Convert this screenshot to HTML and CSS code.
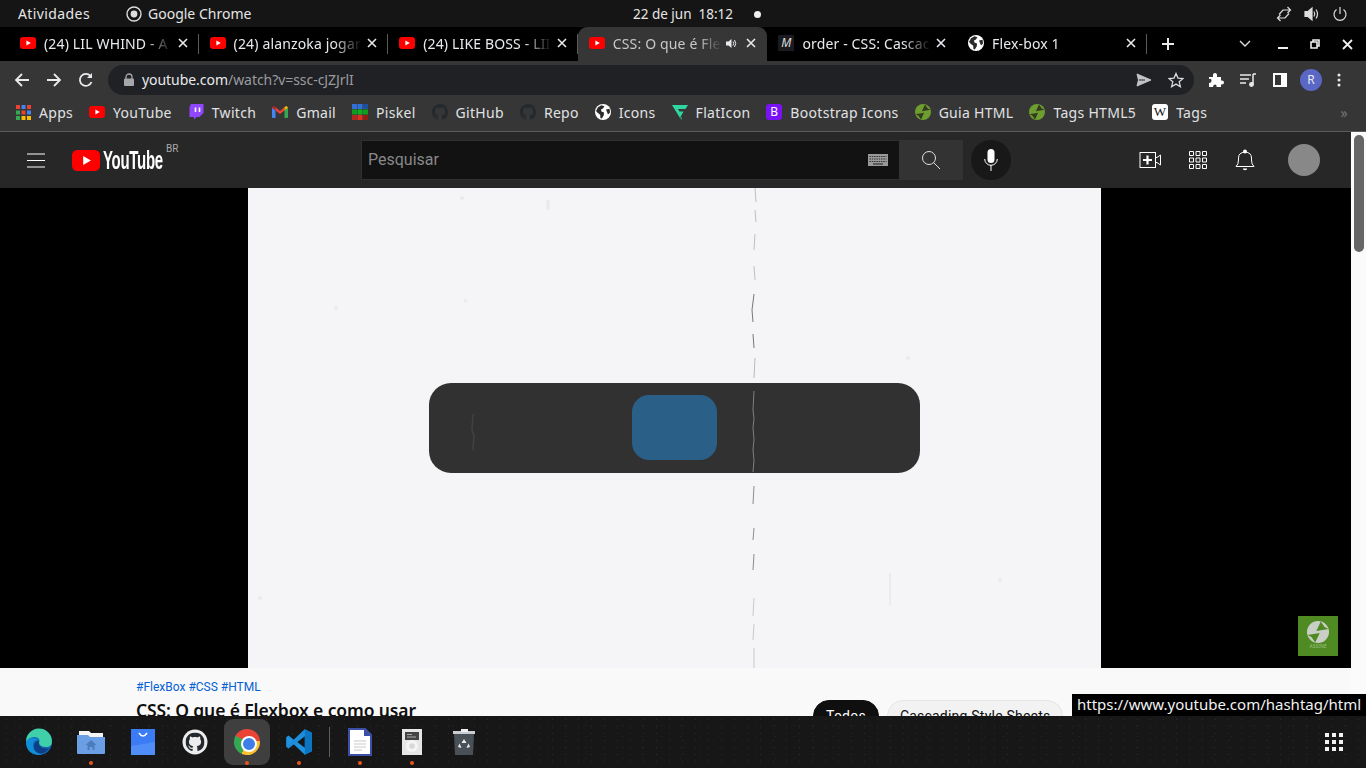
FILE: index.html
```html
<!DOCTYPE html>
<html lang="pt-BR">
<head>
  <meta charset="UTF-8" />
  <title>CSS: O que é Flexbox e como usar</title>
  <link rel="stylesheet" href="styles.css">
</head>
<body>

<svg class="defs" width="0" height="0">
  <symbol id="i-yt" viewBox="0 0 16 12"><rect width="16" height="12" rx="3" fill="#f00"/><path d="M6.4 3.4 10.8 6 6.4 8.6z" fill="#fff"/></symbol>
  <symbol id="i-globe" viewBox="0 0 16 16"><circle cx="8" cy="8" r="8" fill="#fff"/><path d="M3 3.2 6.4 1.3 9.4 2.2 8 4.6 6 5.4 6.4 7.4 9 8.4 8.8 11.2 6.8 14.4 5.4 14 5.2 10.8 2.6 8.8 1 7zM11 5.4 14.6 4.8 15 8.4 13 10.6 12 8z" fill="#2b2b2b"/></symbol>
  <symbol id="i-gh" viewBox="0 0 16 16"><path fill="#24292e" d="M8 0C3.58 0 0 3.58 0 8c0 3.54 2.29 6.53 5.47 7.59.4.07.55-.17.55-.38 0-.19-.01-.82-.01-1.49-2.01.37-2.53-.49-2.69-.94-.09-.23-.48-.94-.82-1.13-.28-.15-.68-.52-.01-.53.63-.01 1.08.58 1.23.82.72 1.21 1.87.87 2.33.66.07-.52.28-.87.51-1.07-1.78-.2-3.64-.89-3.64-3.95 0-.87.31-1.59.82-2.15-.08-.2-.36-1.02.08-2.12 0 0 .67-.21 2.2.82.64-.18 1.32-.27 2-.27.68 0 1.36.09 2 .27 1.53-1.04 2.2-.82 2.2-.82.44 1.1.16 1.92.08 2.12.51.56.82 1.27.82 2.15 0 3.07-1.87 3.75-3.65 3.95.29.25.54.73.54 1.48 0 1.07-.01 1.93-.01 2.2 0 .21.15.46.55.38A8.013 8.013 0 0016 8c0-4.42-3.58-8-8-8z"/></symbol>
  <symbol id="i-guia" viewBox="0 0 16 16"><circle cx="8" cy="8" r="8" fill="#6f9e30"/><path d="M10 .4 6.800 7.200 15.600 5.800 12.800 4.400zM6 15.600 9.200 8.800 .4 10.200 3.200 11.600z" fill="#333c1e"/></symbol>
  <symbol id="i-x" viewBox="0 0 10 10"><path d="M1 1 9 9M9 1 1 9" stroke="#e8eaed" stroke-width="1.6" fill="none"/></symbol>
</svg>

<header class="topbar">
  <div class="topbar-left">
    <span class="activities">Atividades</span>
    <span class="app-name">
      <svg width="16" height="16" viewBox="0 0 16 16"><circle cx="8" cy="8" r="7" fill="none" stroke="#ddd" stroke-width="1.4"/><circle cx="8" cy="8" r="3.4" fill="#ddd"/></svg>
      Google Chrome
    </span>
  </div>
  <div class="clock">22 de jun&nbsp;&nbsp;18:12</div>
  <div class="tray">
    <svg width="16" height="16" viewBox="0 0 16 16" fill="none" stroke="#ddd" stroke-width="1.2"><path d="M3 8.500 7 4H14.500M11.500 1 14.500 4 11.500 7M13 7.500 9 12H1.500M4.500 9 1.500 12 4.500 15"/></svg>
    <svg width="16" height="16" viewBox="0 0 16 16" fill="none" stroke="#ddd" stroke-width="1.2"><path d="M1 5.5H4L8 2V14L4 10.5H1z" fill="#ddd"/><path d="M10 5.5Q11.5 8 10 10.5M12 3.5Q15 8 12 12.5"/></svg>
    <svg width="16" height="16" viewBox="0 0 16 16" fill="none" stroke="#ddd" stroke-width="1.2"><path d="M8 1V8M4.5 3.5A6 6 0 1 0 11.5 3.5"/></svg>
  </div>
</header>

<nav class="tabstrip">
  <div class="tab">
    <svg class="favicon" width="16" height="12"><use href="#i-yt"/></svg>
    <span class="tab-title">(24) LIL WHIND - A</span>
    <svg class="tab-close" width="10" height="10"><use href="#i-x"/></svg>
  </div>
  <div class="tab">
    <svg class="favicon" width="16" height="12"><use href="#i-yt"/></svg>
    <span class="tab-title">(24) alanzoka jogar</span>
    <svg class="tab-close" width="10" height="10"><use href="#i-x"/></svg>
  </div>
  <div class="tab">
    <svg class="favicon" width="16" height="12"><use href="#i-yt"/></svg>
    <span class="tab-title">(24) LIKE BOSS - LII</span>
    <svg class="tab-close" width="10" height="10"><use href="#i-x"/></svg>
  </div>
  <div class="tab active">
    <svg class="favicon" width="16" height="12"><use href="#i-yt"/></svg>
    <span class="tab-title">CSS: O que é Fle</span>
    <svg class="tab-audio" width="11" height="11" viewBox="0 0 11 11"><path d="M0 3.5H2.5L5.5 1V10L2.5 7.5H0z" fill="#e8eaed"/><path d="M7 3.5Q8.5 5.500 7 7.5M8.5 2Q11 5.5 8.5 9" fill="none" stroke="#e8eaed"/></svg>
    <svg class="tab-close" width="10" height="10"><use href="#i-x"/></svg>
  </div>
  <div class="tab no-sep">
    <span class="favicon mdn">M</span>
    <span class="tab-title">order - CSS: Cascac</span>
    <svg class="tab-close" width="10" height="10"><use href="#i-x"/></svg>
  </div>
  <div class="tab">
    <svg class="favicon" width="16" height="16"><use href="#i-globe"/></svg>
    <span class="tab-title">Flex-box 1</span>
    <svg class="tab-close" width="10" height="10"><use href="#i-x"/></svg>
  </div>
  <svg class="new-tab" width="12" height="12" viewBox="0 0 12 12"><path d="M6 0V12M0 6H12" stroke="#e8eaed" stroke-width="2"/></svg>
  <div class="win-controls">
    <svg class="win-list" width="12" height="8" viewBox="0 0 12 8"><path d="M1 1 6 6 11 1" fill="none" stroke="#ddd" stroke-width="1.4"/></svg>
    <svg width="10" height="10" viewBox="0 0 10 10"><path d="M0 9H10" stroke="#eee" stroke-width="2"/></svg>
    <svg width="10" height="10" viewBox="0 0 10 10" fill="none" stroke="#eee" stroke-width="1.6"><path d="M3 3V1H9V7H7M1 3H7V9H1z"/></svg>
    <svg width="11" height="11" viewBox="0 0 11 11"><path d="M1 1 10 10M10 1 1 10" stroke="#eee" stroke-width="1.8"/></svg>
  </div>
</nav>

<div class="toolbar">
  <svg class="tool-icon" width="16" height="16" viewBox="0 0 16 16" fill="none" stroke="#e8eaed" stroke-width="1.8"><path d="M15 8H2M8 2 2 8 8 14"/></svg>
  <svg class="tool-icon" width="16" height="16" viewBox="0 0 16 16" fill="none" stroke="#e8eaed" stroke-width="1.8"><path d="M1 8H14M8 2 14 8 8 14"/></svg>
  <svg class="tool-icon" width="16" height="16" viewBox="0 0 16 16" fill="none" stroke="#e8eaed" stroke-width="1.8"><path d="M13.5 10A6 6 0 1 1 12.5 4"/><path d="M14 1V6H9z" fill="#e8eaed" stroke="none"/></svg>
  <div class="omnibox">
    <svg width="10" height="13" viewBox="0 0 10 13"><path d="M2 6V4A3 3 0 0 1 8 4V6" fill="none" stroke="#a5a7aa" stroke-width="1.3"/><rect y="5.5" width="10" height="7.5" rx="1" fill="#a5a7aa"/></svg>
    <span class="url"><b>youtube.com</b>/watch?v=ssc-cJZJrlI</span>
    <svg class="omni-send" width="16" height="14" viewBox="0 0 16 14"><path d="M1 1 15 7 1 13 2.5 7z" fill="#c3c4c6" stroke="#c3c4c6" stroke-linejoin="round"/><path d="M3 7H9" stroke="#26272a"/></svg>
    <svg class="omni-star" width="16" height="16" viewBox="0 0 16 16"><path d="M8 1.5 10 6.100 15 6.500 11.200 9.800 12.400 14.700 8 12.100 3.600 14.700 4.800 9.800 1 6.500 6 6.100z" fill="none" stroke="#d8d9db" stroke-width="1.3"/></svg>
  </div>
  <svg class="ext-puzzle" width="16" height="16" viewBox="0 0 16 16"><path d="M1 5H5Q4.5 1 7 1T9 5H13V8.5Q16 8 16 10.5T13 12.5V15H8.5Q9 12.5 7 12.5T5 15H1V11Q3.5 11 3.5 8.5T1 7z" fill="#fff"/></svg>
  <svg class="ext-queue" width="16" height="14" viewBox="0 0 16 14" fill="none" stroke="#e8eaed" stroke-width="1.5"><path d="M0 2H11M0 6H9M0 10H6"/><path d="M13 1V11M13 1H16"/><circle cx="11.5" cy="11.5" r="1.7" fill="#e8eaed"/></svg>
  <span class="ext-panel"></span>
  <span class="profile">R</span>
  <svg class="ext-dots" width="4" height="14" viewBox="0 0 4 14"><circle cx="2" cy="2" r="1.5" fill="#e8eaed"/><circle cx="2" cy="7" r="1.5" fill="#e8eaed"/><circle cx="2" cy="12" r="1.5" fill="#e8eaed"/></svg>
</div>

<div class="bookmarks">
  <a class="bm">
    <svg width="15" height="15" viewBox="0 0 15 15"><rect width="4" height="4" fill="#ea4335"/><rect x="5.5" width="4" height="4" fill="#4285f4"/><rect x="11" width="4" height="4" fill="#ea4335"/><rect y="5.5" width="4" height="4" fill="#34a853"/><rect x="5.5" y="5.5" width="4" height="4" fill="#ea4335"/><rect x="11" y="5.5" width="4" height="4" fill="#4285f4"/><rect y="11" width="4" height="4" fill="#34a853"/><rect x="5.5" y="11" width="4" height="4" fill="#fbbc04"/><rect x="11" y="11" width="4" height="4" fill="#fbbc04"/></svg>
    Apps
  </a>
  <a class="bm"><svg width="16" height="12"><use href="#i-yt"/></svg>YouTube</a>
  <a class="bm">
    <svg width="16" height="16" viewBox="0 0 15 16"><path d="M2.5 0H15V9L11 13H8L5.5 15.5V13H1V3z" fill="#9146ff"/><path d="M7 3.500V8M11 3.500V8" stroke="#fff" stroke-width="1.6"/></svg>
    Twitch
  </a>
  <a class="bm">
    <svg width="16" height="12" viewBox="0 0 16 12"><path d="M0 1.5 3.5 4V12H1Q0 12 0 11z" fill="#4285f4"/><path d="M16 1.5 12.5 4V12H15Q16 12 16 11z" fill="#34a853"/><path d="M3.5 1 8 5 12.5 1V4.5L8 8 3.5 4.5z" fill="#ea4335"/><path d="M12.5 1 14.5 0 16 1.5 12.5 4.5z" fill="#fbbc04"/><path d="M0 1.5 1.5 0 3.5 1V4.500z" fill="#c5221f"/></svg>
    Gmail
  </a>
  <a class="bm">
    <svg width="16" height="16" viewBox="0 0 16 16"><rect width="5" height="5" fill="#2f6fd6"/><rect x="5.5" width="5" height="5" fill="#2f6fd6"/><rect x="11" width="5" height="5" fill="#1d4f9c"/><rect y="5.5" width="5" height="5" fill="#0f9d1f"/><rect x="5.5" y="5.5" width="5" height="5" fill="#11b022"/><rect x="11" y="5.5" width="5" height="5" fill="#0f9d1f"/><rect y="11" width="5" height="5" fill="#b3261e"/><rect x="5.5" y="11" width="5" height="5" fill="#d93025"/><rect x="11" y="11" width="5" height="5" fill="#8f1d16"/></svg>
    Piskel
  </a>
  <a class="bm"><svg width="16" height="16"><use href="#i-gh"/></svg>GitHub</a>
  <a class="bm"><svg width="16" height="16"><use href="#i-gh"/></svg>Repo</a>
  <a class="bm"><svg width="16" height="16"><use href="#i-globe"/></svg>Icons</a>
  <a class="bm">
    <svg width="16" height="15" viewBox="0 0 16 15"><path d="M0 0H16L13.5 4H6L7.5 6.5H11.5L8 13 0 0z" fill="#2fd6a0"/><path d="M8 13 9.5 15 10 12z" fill="#1fb583"/></svg>
    FlatIcon
  </a>
  <a class="bm"><span class="bs-logo">B</span>Bootstrap Icons</a>
  <a class="bm"><svg width="16" height="16"><use href="#i-guia"/></svg>Guia HTML</a>
  <a class="bm"><svg width="16" height="16"><use href="#i-guia"/></svg>Tags HTML5</a>
  <a class="bm"><span class="wiki-logo">W</span>Tags</a>
  <span class="bm-more">»</span>
</div>

<main class="page">
  <div class="page-main">
    <div class="masthead">
      <div class="mast-left">
        <svg width="18" height="15" viewBox="0 0 18 15"><path d="M0 1H18M0 7.5H18M0 14H18" stroke="#fff"/></svg>
        <div class="yt-logo">
          <svg width="28" height="21"><use href="#i-yt"/></svg>
          <span class="yt-word"><span>YouTube</span></span>
          <span class="yt-br">BR</span>
        </div>
      </div>
      <div class="search">
        <div class="search-input">
          <span>Pesquisar</span>
          <svg width="20" height="12" viewBox="0 0 20 12"><rect width="20" height="12" fill="#999"/><path d="M1.5 2.5H18.5M1.5 5H18.5M1.5 7.5H18.5" stroke="#333" stroke-dasharray="1.5 .8"/><path d="M5 10H15" stroke="#333" stroke-width="1.2"/></svg>
        </div>
        <div class="search-btn">
          <svg width="20" height="20" viewBox="0 0 20 20" fill="none" stroke="#e0e0e0"><circle cx="8" cy="8" r="6.5"/><path d="M12.500 12.500 19 19"/></svg>
        </div>
        <div class="mic-btn">
          <svg width="14" height="24" viewBox="0 0 14 24"><rect x="3.5" y="1" width="7" height="14" rx="3.5" fill="#fff"/><path d="M.7 11A6.3 6.3 0 0 0 13.3 11M7 17V23" fill="none" stroke="#fff"/></svg>
        </div>
      </div>
      <div class="mast-right">
        <svg width="22" height="18" viewBox="0 0 22 18" fill="none" stroke="#fff"><rect x="1" y="1.5" width="15.500" height="15"/><path d="M16.5 6.500H18L21.5 4V14L18 11.5H16.5"/><path d="M8.5 4.5V13.5M4 9H13" stroke-width="2.2"/></svg>
        <svg class="mast-apps" width="18" height="18" viewBox="0 0 18 18" fill="none" stroke="#fff"><path d="M.5.5H4.5V4.500H.5zM7 .5H11V4.500H7zM13.5.5H17.5V4.500H13.5zM.5 7H4.500V11H.5zM7 7H11V11H7zM13.5 7H17.5V11H13.5zM.5 13.5H4.5V17.5H.5zM7 13.5H11V17.5H7zM13.5 13.5H17.5V17.5H13.5z"/></svg>
        <svg class="mast-bell" width="20" height="22" viewBox="0 0 20 22"><path d="M1 17.5Q3.5 15.5 3.5 11V9Q3.5 3.5 10 3Q16.5 3.5 16.5 9V11Q16.5 15.5 19 17.5z" fill="none" stroke="#fff"/><circle cx="10" cy="2.5" r="2" fill="#fff"/><path d="M8 19.5H12V20.5Q10 22 8 20.5z" fill="#fff"/></svg>
        <span class="avatar"></span>
      </div>
    </div>

    <section class="player">
      <div class="frame">
        <div class="demo-bar">
          <div class="demo-item"></div>
        </div>
        <!-- scratches on the old film frame -->
        <svg class="film-marks" width="853" height="480" viewBox="0 0 853 480" fill="none">
          <path d="M507 0 508 14M507 22 508 34M507 46 506 62M506 78 507 92" stroke="#b0b0b0" stroke-width=".8"/>
          <path d="M506 106 504 122 505 134M505 146 506 160" stroke="#777" stroke-width="1"/>
          <path d="M507 170 506 190M506 203 505 222Q507 230 505 240Q507 252 505 262 507 272 505 284" stroke="#a0a0a0" stroke-width=".7"/>
          <path d="M506 298 505 316M506 340 505 352M506 366 505 382" stroke="#808080" stroke-width=".9"/>
          <path d="M506 410 505 428M506 436 505 452M506 460 506 480" stroke="#bdbdbd" stroke-width=".8"/>
          <path d="M225 226 224 242 226 248 225 262" stroke="#424242" stroke-width="1.5"/>
          <path d="M642 385V418" stroke="#e2e2e4"/>
          <path d="M300 12V22M212 10H216M86 120H90M216 113H219M658 170H662M750 392H754M10 410H14" stroke="#eaeaec" stroke-width="3"/>
        </svg>
      </div>
      <div class="watermark">
        <svg width="22" height="22" viewBox="0 0 16 16"><circle cx="8" cy="8" r="8" fill="#c9cfc4"/><path d="M10 .4 6.800 7.200 15.600 5.800 12.800 4.400zM6 15.600 9.200 8.800 .4 10.200 3.200 11.600z" fill="#4f8a23"/></svg>
        <span>ASSINE</span>
      </div>
    </section>

    <section class="below">
      <div class="video-info">
        <div class="tags">#FlexBox #CSS #HTML</div>
        <h1>CSS: O que é Flexbox e como usar</h1>
      </div>
      <div class="chips">
        <span class="chip chip-on">Todos</span>
        <span class="chip">Cascading Style Sheets</span>
      </div>
    </section>
  </div>
  <div class="scrollbar"><div class="thumb"></div></div>
  <div class="link-tip">https://www.youtube.com/hashtag/html</div>
</main>

<footer class="dock">
  <div class="dock-item">
    <svg width="28" height="28" viewBox="0 0 28 28"><circle cx="14" cy="14" r="13" fill="#1566b8"/><path d="M1 14A13 13 0 0 1 27 13Q27 19 21 19T14 15Q16 10 10 9Q4 9 1 14z" fill="#3fcfa9"/><path d="M8 17Q8 25 17 26.5Q10 28 5 24Q1 20 1 14Q3 10 8 10Q12 10 13 12Q8 12 8 17z" fill="#0f8fd6"/><path d="M14 17Q18 22 24 20Q20 27 13 25Q8 22 9 17Q10 13 14 13z" fill="#0b3f86"/></svg>
  </div>
  <div class="dock-item has-dot">
    <svg width="30" height="26" viewBox="0 0 30 26"><path d="M3 2H13L15 4H27V10H3z" fill="#f4f4f4"/><path d="M1 6H12L14 8H29V24Q29 25 28 25H2Q1 25 1 24z" fill="#6a9fe6"/><path d="M15 11 9.5 16H11.5V21H13.5V18H16.5V21H18.5V16H20.5z" fill="#4b7dbd"/></svg>
  </div>
  <div class="dock-item">
    <svg width="24" height="26" viewBox="0 0 24 26"><rect width="24" height="26" fill="#3b7cf5"/><path d="M0 26V17L24 13V26z" fill="#4f8df7"/><path d="M8 4Q12 10 16 4" fill="none" stroke="#fff" stroke-width="1.5"/></svg>
  </div>
  <div class="dock-item">
    <svg width="26" height="26" viewBox="0 0 26 26"><circle cx="13" cy="13" r="12.5" fill="#ededed"/><svg x="3.5" y="3.5" width="19" height="19" viewBox="0 0 16 16"><use href="#i-gh"/></svg></svg>
  </div>
  <div class="dock-item chrome-active has-dot">
    <span class="chrome-logo"></span>
  </div>
  <div class="dock-item has-dot">
    <svg width="28" height="28" viewBox="0 0 24 24"><path fill-rule="evenodd" fill="#1f93e0" d="M17 1 23 4V20L17 23 7.5 14 3 17.5 1 16V8L3 6.5 7.5 10zM17 7 10.5 12 17 17z"/><path d="M17 1 23 4V20L17 23z" fill="#0a75c2"/><path d="M1 16 17 1V7L3 17.5z" fill="#1b86d6" opacity=".5"/></svg>
  </div>
  <span class="dock-sep"></span>
  <div class="dock-item has-dot">
    <svg width="24" height="28" viewBox="0 0 24 28"><path d="M1 1H17L23 7V27H1z" fill="#fff" stroke="#3b4ea8" stroke-width="2"/><path d="M16 1 23 8H16z" fill="#3b4ea8"/><path d="M6 13H18M6 16H18M6 19H18M6 22H14" stroke="#c7c8cc"/></svg>
  </div>
  <div class="dock-item has-dot">
    <svg width="20" height="26" viewBox="0 0 20 26"><rect width="20" height="26" fill="#e6e6e6"/><rect x="3" y="3" width="14" height="8" fill="#444"/><path d="M5 5.500H10M5 8H14" stroke="#aaa"/><circle cx="10" cy="17" r="6" fill="#f4f4f4"/><circle cx="10" cy="17" r="2.8" fill="#d7d7d7"/></svg>
  </div>
  <div class="dock-item">
    <svg width="22" height="26" viewBox="0 0 22 26"><rect y="2" width="22" height="3" fill="#c9ccd0"/><rect x="8" width="7" height="3" fill="#eee"/><path d="M1 5H21L20 26H2z" fill="#4a5058"/><path d="M11 10 13.5 14H8.5zM15.5 14.5 17 18 13.5 19zM6.5 14.5 5 18 8.5 19z" fill="#eee"/></svg>
  </div>
  <svg class="dock-grid" width="18" height="18" viewBox="0 0 18 18" fill="#f2f2f2"><rect width="4" height="4"/><rect x="7" width="4" height="4"/><rect x="14" width="4" height="4"/><rect y="7" width="4" height="4"/><rect x="7" y="7" width="4" height="4"/><rect x="14" y="7" width="4" height="4"/><rect y="14" width="4" height="4"/><rect x="7" y="14" width="4" height="4"/><rect x="14" y="14" width="4" height="4"/></svg>
</footer>

</body>
</html>
```

FILE: styles.css
```css
* {
  box-sizing: border-box;
}
body {
  margin: 0;
  height: 768px;
  overflow: hidden;
  display: flex;
  flex-direction: column;
  font-family: "Noto Sans", sans-serif;
  font-size: 14px;
  color: #e8eaed;
  background: #000;
}
svg {
  flex: none;
  display: block;
}
.defs {
  position: absolute;
}

/* gnome bar */
.topbar {
  height: 27px;
  flex: none;
  background: #151515;
  display: grid;
  grid-template-columns: 1fr auto 1fr;
  align-items: center;
  padding: 0 18px;
  color: #e6e6e6;
}
.topbar-left {
  display: flex;
  align-items: center;
  gap: 36px;
}
.activities {
  letter-spacing: .4px;
}
.app-name {
  display: flex;
  align-items: center;
  gap: 6px;
}
.clock {
  position: relative;
  font-size: 13.5px;
}
.clock::after {
  content: "";
  position: absolute;
  left: 100%;
  top: 6px;
  margin-left: 21px;
  width: 7px;
  height: 7px;
  border-radius: 50%;
  background: #eee;
}
.tray {
  display: flex;
  justify-content: flex-end;
  gap: 12px;
}

/* tabs */
.tabstrip {
  height: 34px;
  flex: none;
  background: #000;
  display: flex;
  align-items: stretch;
  padding-left: 9px;
}
.tab {
  position: relative;
  width: 189.6px;
  display: flex;
  align-items: center;
  padding: 0 11px 2px;
  letter-spacing: .15px;
}
.tab::after {
  content: "";
  position: absolute;
  right: 0;
  top: 7px;
  bottom: 7px;
  width: 1px;
  background: #5a5a5a;
}
.tab.active {
  background: #363636;
  border-radius: 9px 9px 0 0;
  color: #c8c8c8;
}
.tab.active::after,
.tab.no-sep::after {
  display: none;
}
.favicon {
  width: 16px;
  margin-right: 8px;
  flex: none;
}
.mdn {
  height: 16px;
  background: #1b1b1f;
  font-size: 12px;
  font-style: italic;
  text-align: center;
  line-height: 16px;
  color: #ddd;
}
.tab-title {
  flex: 1;
  min-width: 0;
  white-space: nowrap;
  overflow: hidden;
  -webkit-mask-image: linear-gradient(to right, #000 78%, transparent 100%);
  mask-image: linear-gradient(to right, #000 78%, transparent 100%);
}
.tab-close {
  margin-left: 5px;
}
.tab-audio {
  margin-left: 4px;
  margin-right: 4px;
}
.new-tab {
  align-self: center;
  margin-left: 15px;
}
.win-controls {
  margin-left: auto;
  display: flex;
  align-items: center;
  gap: 22px;
  padding-right: 13px;
}
.win-list {
  margin-right: 5px;
}

/* toolbar */
.toolbar {
  height: 37px;
  flex: none;
  background: #363636;
  display: flex;
  align-items: center;
  padding-left: 14px;
}
.tool-icon {
  margin-right: 16px;
}
.omnibox {
  width: 1086px;
  height: 30px;
  margin-left: -2px;
  border-radius: 15px;
  background: #202124;
  display: flex;
  align-items: center;
  padding: 0 10px 0 16px;
  color: #9a9ca0;
}
.url {
  margin-left: 8px;
  flex: 1;
  letter-spacing: -.05px;
}
.url b {
  font-weight: 400;
  color: #e8eaed;
}
.omni-star {
  margin-left: 16px;
}
.ext-puzzle {
  margin-left: 14px;
}
.ext-queue {
  margin-left: 16px;
}
.ext-panel {
  width: 14px;
  height: 14px;
  margin-left: 17px;
  border: 2px solid #fff;
  border-right-width: 6px;
  background: #363636;
}
.profile {
  width: 22px;
  height: 22px;
  margin-left: 13px;
  border-radius: 50%;
  background: #5a67c4;
  font-size: 12px;
  line-height: 22px;
  text-align: center;
}
.ext-dots {
  margin-left: 15px;
}

/* bookmarks */
.bookmarks {
  height: 33px;
  flex: none;
  background: #363636;
  display: flex;
  align-items: center;
  padding: 0 0 5px 16px;
  gap: 16px;
  color: #e0e2e5;
  letter-spacing: .3px;
}
.bm {
  display: flex;
  align-items: center;
  gap: 8px;
}
.bs-logo {
  width: 16px;
  height: 16px;
  border-radius: 3px;
  background: #7a12f5;
  color: #fff;
  font-size: 12px;
  line-height: 16px;
  text-align: center;
}
.wiki-logo {
  width: 16px;
  height: 16px;
  border-radius: 3px;
  background: #fff;
  color: #111;
  font-family: "Liberation Serif", serif;
  font-size: 13px;
  line-height: 16px;
  text-align: center;
}
.bm-more {
  margin-left: auto;
  margin-right: 18px;
  color: #777;
}

/* youtube page */
.page {
  position: relative;
  height: 585px;
  flex: none;
  display: flex;
  border-top: 1px solid #5c5c5c;
  overflow: hidden;
  background: #f9f9f9;
}
.page-main {
  flex: 1;
  min-width: 0;
  display: flex;
  flex-direction: column;
}
.masthead {
  height: 56px;
  flex: none;
  background: #272727;
  display: flex;
  align-items: center;
  padding-left: 27px;
}
.mast-left {
  display: flex;
  align-items: center;
  gap: 27px;
  width: 334px;
}
.yt-logo {
  display: flex;
  align-items: center;
  gap: 3px;
}
.yt-word {
  width: 59px;
  font-family: "Liberation Sans", sans-serif;
  font-weight: 700;
  font-size: 25px;
  line-height: 20px;
  color: #fff;
  white-space: nowrap;
}
.yt-word span {
  display: inline-block;
  transform: scaleX(.6);
  transform-origin: left center;
  letter-spacing: -.5px;
}
.yt-br {
  align-self: flex-start;
  margin: -7px 0 0 1px;
  font-family: Roboto, sans-serif;
  font-size: 10px;
  line-height: 12px;
  color: #aaa;
}
.search {
  display: flex;
  align-items: center;
}
.search-input {
  width: 538px;
  height: 40px;
  background: #121212;
  border: 1px solid #303030;
  border-right: 0;
  display: flex;
  align-items: center;
  justify-content: space-between;
  padding: 0 11px 0 6px;
  font-family: Roboto, sans-serif;
  font-size: 16px;
  color: #888;
}
.search-input span {
  margin-top: -2px;
}
.search-btn {
  width: 64px;
  height: 40px;
  background: #333;
  display: flex;
  align-items: center;
  justify-content: center;
}
.mic-btn {
  width: 40px;
  height: 40px;
  margin-left: 8px;
  border-radius: 50%;
  background: #181818;
  display: flex;
  align-items: center;
  justify-content: center;
}
.mast-right {
  margin-left: auto;
  display: flex;
  align-items: center;
  padding-right: 31px;
}
.mast-apps {
  margin-left: 28px;
}
.mast-bell {
  margin-left: 28px;
}
.avatar {
  width: 32px;
  height: 32px;
  margin-left: 33px;
  border-radius: 50%;
  background: #888;
}
.player {
  position: relative;
  height: 480px;
  flex: none;
  background: #000;
  display: flex;
  justify-content: center;
  padding-right: 3px;
}
.frame {
  position: relative;
  width: 853px;
  height: 480px;
  background: #f5f5f7;
  display: flex;
  align-items: center;
  justify-content: center;
}
.demo-bar {
  width: 491px;
  height: 90px;
  border-radius: 22px;
  background: #323132;
  display: flex;
  justify-content: center;
  padding-top: 12px;
}
.demo-item {
  width: 85px;
  height: 65px;
  border-radius: 17px;
  background: #2a5f87;
}
.film-marks {
  position: absolute;
  left: 0;
  top: 0;
}
.watermark {
  position: absolute;
  left: 1298px;
  top: 428px;
  width: 40px;
  height: 40px;
  background: #4f8a23;
  display: flex;
  flex-direction: column;
  align-items: center;
  padding-top: 5px;
  font-size: 5px;
  color: #9fc07f;
}
.below {
  flex: 1;
  min-height: 0;
  display: flex;
  padding-left: 136px;
  background: #f9f9f9;
  color: #0f0f0f;
}
.video-info {
  width: 677px;
  flex: none;
  padding-top: 12px;
}
.tags {
  font-family: Roboto, sans-serif;
  font-size: 12px;
  line-height: 14px;
  color: #065fd4;
}
.below h1 {
  margin: 4px 0 0;
  font-size: 17.5px;
  font-weight: 600;
  line-height: 24px;
  letter-spacing: -.12px;
}
.chips {
  display: flex;
  gap: 8px;
  padding-top: 32px;
}
.chip {
  height: 32px;
  padding: 0 12px;
  border-radius: 16px;
  border: 1px solid #e5e5e5;
  background: #f2f2f2;
  font-family: Roboto, sans-serif;
  line-height: 30px;
  letter-spacing: .22px;
  white-space: nowrap;
}
.chip-on {
  background: #0f0f0f;
  border-color: #0f0f0f;
  color: #fff;
}
.scrollbar {
  width: 15px;
  flex: none;
  background: #fbfbfb;
  padding: 3px 2px 0 3px;
}
.thumb {
  height: 117px;
  border-radius: 5px;
  background: #666;
}
.link-tip {
  position: absolute;
  right: 0;
  bottom: 0;
  width: 294px;
  height: 22px;
  background: #000;
  color: #f1f1f1;
  font-size: 15px;
  line-height: 21px;
  padding-left: 5px;
  white-space: nowrap;
}

/* dock */
.dock {
  height: 52px;
  flex: none;
  background-color: #171717;
  background-image: radial-gradient(#2b2b2b .6px, transparent .8px), radial-gradient(#242424 .6px, transparent .8px);
  background-size: 13px 7px, 19px 11px;
  background-position: 0 0, 6px 4px;
  display: flex;
  align-items: center;
  padding-left: 13px;
}
.dock-item {
  position: relative;
  width: 52px;
  height: 46px;
  display: flex;
  align-items: center;
  justify-content: center;
}
.dock-item.has-dot::after {
  content: "";
  position: absolute;
  left: 50%;
  bottom: 0;
  margin-left: -2px;
  width: 4px;
  height: 4px;
  border-radius: 50%;
  background: #e95420;
}
.chrome-active {
  border-radius: 9px;
  background: #3f3f3f;
  width: 46px;
  margin: 0 3px;
}
.chrome-logo {
  position: relative;
  width: 26px;
  height: 26px;
  border-radius: 50%;
  background: conic-gradient(#ea4335 -60deg, #ea4335 85deg, #fbc02d 85deg, #fbc02d 205deg, #34a853 205deg, #34a853 300deg, #ea4335 300deg);
}
.chrome-logo::after {
  content: "";
  position: absolute;
  left: 7px;
  top: 7px;
  width: 12px;
  height: 12px;
  border-radius: 50%;
  background: #3f7ee8;
  border: 2px solid #fff;
}
.dock-sep {
  width: 1px;
  height: 30px;
  margin: 0 4px;
  background: #5c5c5c;
}
.dock-grid {
  margin-left: auto;
  margin-right: 23px;
}
```
